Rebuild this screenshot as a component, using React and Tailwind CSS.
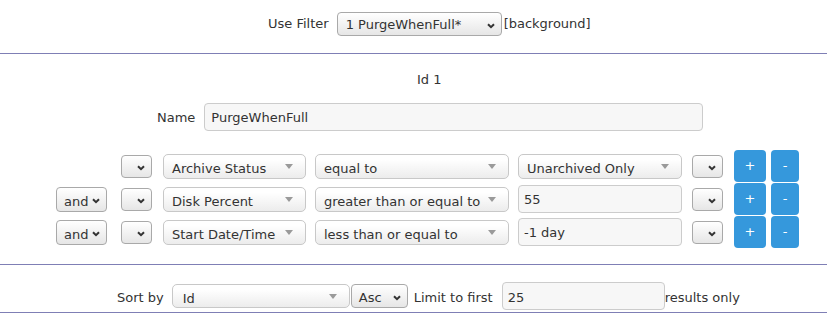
import React from "react";

function Chevron() {
  return (
    <svg width="8" height="6" viewBox="0 0 8 6" className="mt-[4px] shrink-0">
      <path d="M1 1.2l3 3 3-3" stroke="#333" strokeWidth="2" fill="none" />
    </svg>
  );
}

function Tri() {
  return (
    <svg width="8" height="5" viewBox="0 0 8 5" className="shrink-0">
      <path d="M0 0h8L4 5z" fill="#9a9a9a" />
    </svg>
  );
}

function NSelect({ className, text, pl = "pl-[7px]", tp = "pt-[5px]" }) {
  return (
    <div
      className={`flex items-center justify-between rounded-[4px] border border-[#a9a9a9] bg-gradient-to-b from-white to-[#e6e6e6] ${pl} pr-[6px] ${className}`}
    >
      <span className={`whitespace-nowrap ${tp}`}>{text}</span>
      <Chevron />
    </div>
  );
}

function CSelect({ className, text, pl = "pl-[8px]", tp = "pt-[6px]" }) {
  return (
    <div
      className={`flex items-center justify-between rounded-[5px] border border-[#c8c8c8] bg-gradient-to-b from-white from-20% to-[#ececec] ${pl} pr-[12px] ${className}`}
    >
      <span className={`whitespace-nowrap ${tp}`}>{text}</span>
      <Tri />
    </div>
  );
}

function Input({ className, text, pl = "pl-[5px]", tp = "pt-[1px]" }) {
  return (
    <div
      className={`flex items-center rounded-[4px] border border-[#cccccc] bg-[#f7f7f7] ${pl} ${className}`}
    >
      <span className={`whitespace-nowrap ${tp}`}>{text}</span>
    </div>
  );
}

function Btn({ className, text }) {
  return (
    <div
      className={`flex items-center justify-center rounded-[4px] bg-[#3598dc] text-white ${className}`}
    >
      {text}
    </div>
  );
}

function Row({ first, field, op, value, isInput }) {
  return (
    <div className="flex h-[32px] items-center">
      {first ? (
        <div className="w-[51px] shrink-0" />
      ) : (
        <NSelect className="h-[25px] w-[51px] shrink-0" text="and" />
      )}
      <NSelect className="ml-[14px] h-[23px] w-[31px] shrink-0" text="" />
      <CSelect className="ml-[11px] h-[25px] w-[143px] shrink-0" text={field} />
      <CSelect className="ml-[9px] h-[25px] w-[194px] shrink-0" text={op} />
      {isInput ? (
        <Input className="ml-[9px] h-[28px] w-[164px] shrink-0" text={value} />
      ) : (
        <CSelect className="ml-[9px] h-[25px] w-[164px] shrink-0" text={value} />
      )}
      <NSelect className="ml-[10px] h-[23px] w-[31px] shrink-0" text="" />
      <Btn className="ml-[11px] h-[32px] w-[32px] shrink-0" text="+" />
      <Btn className="ml-[5px] h-[32px] w-[28px] shrink-0" text="-" />
    </div>
  );
}

export default function App() {
  return (
    <div className="h-[329px] w-[827px] overflow-hidden bg-white font-['DejaVu_Sans',sans-serif] text-[13px] leading-[16px] text-[#333]">
      <div className="flex items-center pl-[268px] pt-[12px]">
        <span>Use Filter</span>
        <NSelect
          className="ml-[8px] h-[24px] w-[165px]"
          text="1 PurgeWhenFull*"
          pl="pl-[8px]"
          tp="pt-[1px]"
        />
        <span className="ml-[2px]">[background]</span>
      </div>
      <div className="mt-[17px] border-t border-[#7f7fb5]" />
      <div className="mt-[18px] pl-[417px]">Id 1</div>
      <div className="mt-[15px] flex items-center pl-[157px]">
        <span className="pt-[1px]">Name</span>
        <Input
          className="ml-[9px] h-[28px] w-[499px]"
          text="PurgeWhenFull"
          pl="pl-[6px]"
        />
      </div>
      <div className="mt-[19px] flex flex-col gap-[1px] pl-[56px]">
        <Row first field="Archive Status" op="equal to" value="Unarchived Only" />
        <Row field="Disk Percent" op="greater than or equal to" value="55" isInput />
        <Row field="Start Date/Time" op="less than or equal to" value="-1 day" isInput />
      </div>
      <div className="mt-[16px] border-t border-[#7f7fb5]" />
      <div className="mt-[17px] flex items-center pl-[117px]">
        <span className="pt-[4px]">Sort by</span>
        <CSelect
          className="ml-[8px] h-[24px] w-[178px]"
          text="Id"
          pl="pl-[10px]"
          tp="pt-[6px]"
        />
        <NSelect className="ml-[1px] h-[24px] w-[57px]" text="Asc" tp="pt-[3px]" />
        <span className="ml-[6px] pt-[4px]">Limit to first</span>
        <Input className="ml-[9px] h-[28px] w-[163px]" text="25" tp="pt-[3px]" />
        <span className="pt-[4px]">results only</span>
      </div>
      <div className="mt-[2px] border-t border-[#7f7fb5]" />
    </div>
  );
}
